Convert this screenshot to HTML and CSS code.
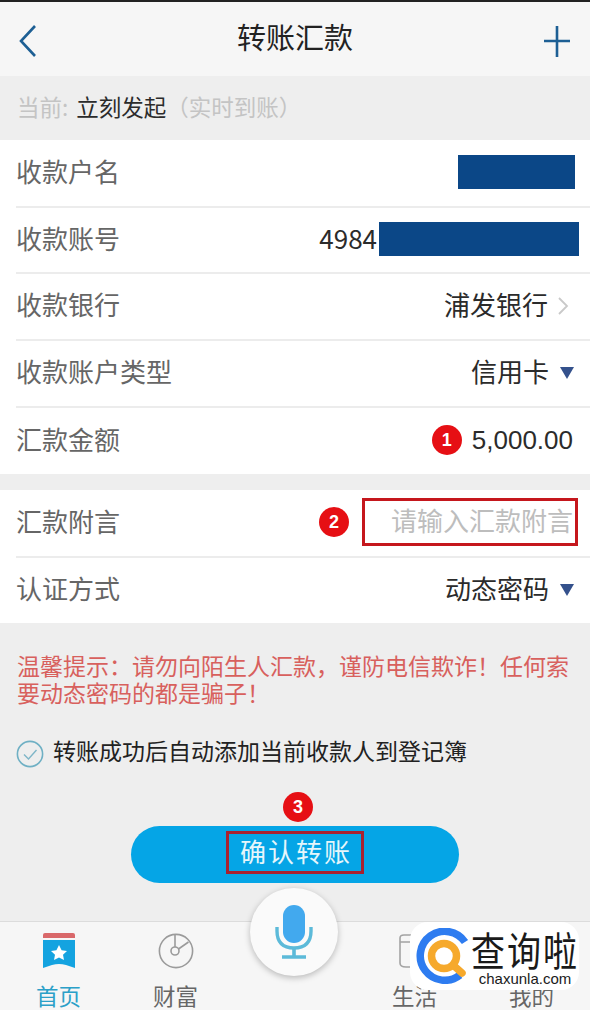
FILE: index.html
```html
<!DOCTYPE html>
<html lang="zh-CN">
<head>
    <meta charset="UTF-8">
    <title>转账汇款</title>
    <link rel="stylesheet" href="styles.css">
</head>
<body>
    <div class="page">
        <header class="topbar">
            <svg class="top-icon" width="28" height="32" viewBox="0 0 28 32"><path d="M16 1 L2 16 L16 31" fill="none" stroke="#1d5f94" stroke-width="2.6"/></svg>
            <h1 class="top-title">转账汇款</h1>
            <svg class="top-icon" width="28" height="32" viewBox="0 0 28 32"><path d="M14 1 V32 M1 16 H27" fill="none" stroke="#1d5f94" stroke-width="2.6"/></svg>
        </header>

        <div class="subbar">
            <span class="muted">当前:</span><span class="subbar-now">立刻发起</span><span class="muted">&#xFF08;实时到账&#xFF09;</span>
        </div>

        <section class="group">
            <div class="row row-tall">
                <span class="row-label">收款户名</span>
                <span class="row-value"><i class="mask mask-name"></i></span>
            </div>
            <div class="row row-short">
                <span class="row-label">收款账号</span>
                <span class="row-value row-account"><span class="cjk-shift">4984</span><i class="mask mask-account"></i></span>
            </div>
            <div class="row">
                <span class="row-label">收款银行</span>
                <span class="row-value"><span class="cjk-shift">浦发银行</span>
                    <svg class="row-mark row-chevron" width="12" height="20" viewBox="0 0 12 20"><path d="M2 2 L10 10 L2 18" fill="none" stroke="#c9c9c9" stroke-width="1.8"/></svg>
                </span>
            </div>
            <div class="row">
                <span class="row-label">收款账户类型</span>
                <span class="row-value"><span class="cjk-shift">信用卡</span>
                    <svg class="row-mark" width="14" height="12" viewBox="0 0 14 12"><path d="M0 0 H14 L7 12 Z" fill="#34518c"/></svg>
                </span>
            </div>
            <div class="row row-short">
                <span class="row-label">汇款金额</span>
                <span class="row-value row-amount"><b class="badge">1</b>5,000.00</span>
            </div>
        </section>

        <section class="group group-second">
            <div class="row row-tall">
                <span class="row-label">汇款附言</span>
                <span class="row-value"><b class="badge">2</b><span class="note-box">请输入汇款附言</span></span>
            </div>
            <div class="row row-shortest">
                <span class="row-label">认证方式</span>
                <span class="row-value"><span class="cjk-shift">动态密码</span>
                    <svg class="row-mark" width="14" height="12" viewBox="0 0 14 12"><path d="M0 0 H14 L7 12 Z" fill="#34518c"/></svg>
                </span>
            </div>
        </section>

        <p class="tip">温馨提示&#xFF1A;请勿向陌生人汇款&#xFF0C;谨防电信欺诈&#xFF01;任何索要动态密码的都是骗子&#xFF01;</p>

        <div class="agree">
            <svg width="28" height="28" viewBox="0 0 28 28"><circle cx="14" cy="14" r="12.6" fill="none" stroke="#6fb0c4" stroke-width="1.6"/><path d="M8 14.5 L12.5 19 L20.5 10" fill="none" stroke="#7fb6c8" stroke-width="1.4"/></svg>
            <span class="agree-text">转账成功后自动添加当前收款人到登记簿</span>
        </div>

        <div class="submit">
            <b class="badge">3</b>
            <button class="submit-btn"><span class="submit-label">确认转账</span></button>
        </div>

        <nav class="tabs">
            <div class="tab tab-active">
                <svg width="34" height="36" viewBox="0 0 34 36"><path d="M1 2 Q1 0 3 0 H31 Q33 0 33 2 V5 H1 Z" fill="#d9686a"/><path d="M1 7 H33 V35 L24 32 Q17 30 10 32 L1 35 Z" fill="#14a3e0"/><path d="M17 12 L19.6 17.2 L25 18 L21 21.8 L22 27 L17 24.4 L12 27 L13 21.8 L9 18 L14.4 17.2 Z" fill="#fff"/></svg>
                <span>首页</span>
            </div>
            <div class="tab">
                <svg width="36" height="36" viewBox="0 0 36 36"><circle cx="18" cy="18" r="16.6" fill="none" stroke="#9b9b9b" stroke-width="1.6"/><circle cx="17" cy="18" r="4" fill="none" stroke="#9b9b9b" stroke-width="1.6"/><path d="M17 14 V2 M20.5 16 L30.5 9" fill="none" stroke="#9b9b9b" stroke-width="1.6"/></svg>
                <span>财富</span>
            </div>
            <div class="tab-gap"></div>
            <div class="tab">
                <svg width="36" height="36" viewBox="0 0 36 36"><path d="M9 34 Q3 34 3 30 V5 Q3 2 7 2 H29 Q33 2 33 5 V30 Q33 34 29 34 Z M3 9 H33" fill="none" stroke="#a3a3a3" stroke-width="1.6"/></svg>
                <span>生活</span>
            </div>
            <div class="tab">
                <svg width="36" height="36" viewBox="0 0 36 36"><circle cx="18" cy="18" r="16" fill="none" stroke="#a3a3a3" stroke-width="1.6"/></svg>
                <span>我的</span>
            </div>
        </nav>

        <div class="mic">
            <svg width="38" height="54" viewBox="0 0 38 54"><rect x="8" y="0" width="22" height="38" rx="11" fill="#42a9ee"/><path d="M2 22 V26 Q2 43 19 43 Q36 43 36 26 V22" fill="none" stroke="#5cbad9" stroke-width="3.4"/><path d="M19 43 V51 M7 52 H31" fill="none" stroke="#5cbad9" stroke-width="3.6"/></svg>
        </div>

        <div class="watermark">
            <svg width="56" height="56" viewBox="0 0 56 56"><path d="M49 14 A24.5 24.5 0 1 0 44 47" fill="none" stroke="#2e7cf0" stroke-width="7.5"/><circle cx="28" cy="28" r="12.5" fill="#fff" stroke="#f6a92c" stroke-width="7.5"/><path d="M37 37 L46 45" stroke="#f6a92c" stroke-width="7.5" stroke-linecap="round"/></svg>
            <div class="watermark-text">
                <span class="watermark-cn">查询啦</span>
                <span class="watermark-en">chaxunla.com</span>
            </div>
        </div>
    </div>
</body>
</html>
```

FILE: styles.css
```css
* {
    margin: 0;
    padding: 0;
    box-sizing: border-box;
}

body {
    font-family: "Noto Sans CJK SC", "Liberation Sans", sans-serif;
    background: #eeeeee;
    color: #222;
}

.page {
    position: relative;
    width: 590px;
    height: 1010px;
    overflow: hidden;
    background: #eeeeee;
}

.topbar {
    display: flex;
    align-items: center;
    justify-content: space-between;
    height: 76px;
    padding: 4px 19px 0 19px;
    background: #f6f6f6;
    border-top: 2px solid #222;
}

.top-title {
    padding-bottom: 10px;
    font-size: 29px;
    font-weight: 400;
    color: #222;
}

.subbar {
    display: flex;
    align-items: center;
    height: 64px;
    padding: 0 0 4px 17px;
    font-size: 22.5px;
    background: #eeeeee;
}

.muted {
    color: #c4c4c4;
}

.subbar-now {
    margin-left: 8px;
    color: #2b2b2b;
}

.group {
    background: #fff;
    padding-left: 16px;
}

.group-second {
    margin-top: 16px;
}

.row {
    display: flex;
    align-items: center;
    justify-content: space-between;
    height: 67px;
    padding: 0 16px 2px 0;
    border-bottom: 2px solid #ececec;
}

.row-tall {
    height: 68px;
}

.row-short {
    height: 66px;
}

.row-shortest {
    height: 65px;
}

.row:last-child {
    border-bottom: 0;
}

.row-label {
    padding-bottom: 4px;
    font-size: 26px;
    color: #666;
}

.row-value {
    display: flex;
    align-items: center;
    font-size: 26px;
    color: #2b2b2b;
}

.cjk-shift {
    padding-bottom: 4px;
}

.row-mark {
    margin-left: 11px;
    margin-right: 0;
}

.row-chevron {
    margin-left: 9px;
    margin-right: 5px;
}

.mask {
    display: block;
    height: 34px;
    background: #0b4787;
}

.mask-name {
    width: 117px;
    margin-right: -1px;
}

.mask-account {
    width: 200px;
    margin-left: 2px;
}

.row-account {
    margin-right: -5px;
}

.row-amount {
    font-family: "Liberation Sans", sans-serif;
    margin-right: 1px;
}

.badge {
    display: flex;
    align-items: center;
    justify-content: center;
    width: 30px;
    height: 30px;
    border-radius: 50%;
    background: #e60f14;
    color: #fff;
    font-family: "Liberation Sans", sans-serif;
    font-size: 18px;
    font-weight: 700;
}

.row-amount .badge {
    margin-right: 10px;
}

.note-box {
    width: 216px;
    height: 48px;
    margin-left: 13px;
    margin-right: -4px;
    padding-right: 2px;
    border: 3px solid #c5171d;
    font-size: 26px;
    line-height: 38px;
    text-align: right;
    color: #bdbdbd;
}

.tip {
    margin: 29px 17px 0;
    font-size: 23px;
    line-height: 27px;
    color: #d8605d;
}

.agree {
    display: flex;
    align-items: center;
    gap: 9px;
    margin: 30px 0 0 16px;
    font-size: 23px;
    color: #222;
}

.agree-text {
    padding-bottom: 7px;
    line-height: 28px;
}

.submit {
    display: flex;
    flex-direction: column;
    align-items: center;
    margin-top: 21px;
}

.submit .badge {
    margin: 0 0 4px 6px;
}

.submit-btn {
    display: flex;
    align-items: center;
    justify-content: center;
    width: 328px;
    height: 57px;
    border: 0;
    border-radius: 29px;
    background: #05a5e6;
    font-family: inherit;
}

.submit-label {
    width: 138px;
    height: 43px;
    margin-bottom: 4px;
    border: 3px solid #a8202f;
    font-size: 26px;
    line-height: 33px;
    letter-spacing: 2px;
    text-indent: 2px;
    color: #e6f6fb;
}

.tabs {
    position: absolute;
    left: 0;
    right: 0;
    bottom: 0;
    display: flex;
    height: 89px;
    background: #f6f6f6;
    border-top: 1px solid #dcdcdc;
}

.tab {
    flex: 1;
    display: flex;
    flex-direction: column;
    align-items: center;
    gap: 14px;
    padding-top: 11px;
    font-size: 22.5px;
    line-height: 24px;
    color: #666;
}

.tab-gap {
    flex: 0 0 122px;
}

.tab-active {
    color: #2ba0c8;
}

.mic {
    position: absolute;
    left: 250px;
    top: 888px;
    display: flex;
    align-items: center;
    justify-content: center;
    width: 88px;
    height: 88px;
    border-radius: 50%;
    background: #fafafa;
    box-shadow: 0 2px 6px rgba(0, 0, 0, 0.25);
}

.watermark {
    position: absolute;
    left: 410px;
    top: 922px;
    display: flex;
    align-items: center;
    width: 169px;
    height: 68px;
    padding-left: 6px;
    border-radius: 18px;
    background: #fff;
}

.watermark-text {
    display: flex;
    flex-direction: column;
    align-items: center;
    width: 106px;
}

.watermark-cn {
    font-size: 34px;
    line-height: 44px;
    letter-spacing: 2px;
    white-space: nowrap;
    transform: scaleY(1.18);
    color: #1a1a1a;
}

.watermark-en {
    font-family: "Liberation Sans", sans-serif;
    font-size: 15px;
    line-height: 15px;
    white-space: nowrap;
    color: #1a1a1a;
}
```
